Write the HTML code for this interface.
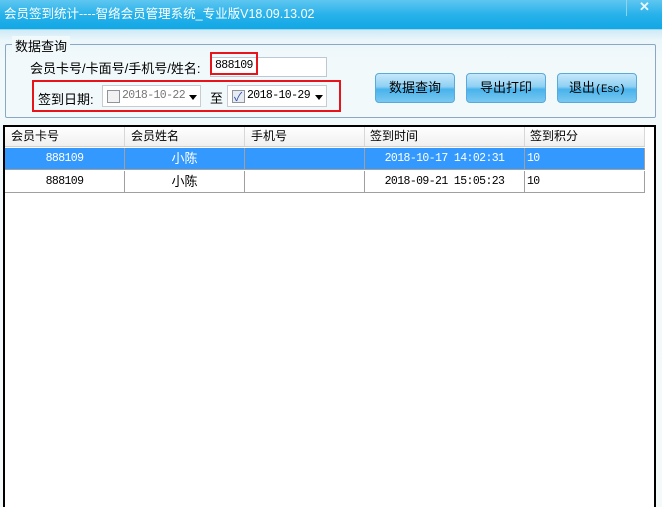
<!DOCTYPE html>
<html><head><meta charset="utf-8"><style>
*{margin:0;padding:0;box-sizing:border-box}
body{width:662px;height:507px;overflow:hidden;position:relative;font-family:"Liberation Sans","Noto Sans CJK SC","WenQuanYi Zen Hei",sans-serif;font-size:12px;color:#000;background:linear-gradient(#cfeaf6 30px,#eaf6fa 40px,#f2f9fb 60px,#f4f9f9)}
.a{position:absolute}
.m{font-family:"Liberation Mono","DejaVu Sans Mono",monospace;font-size:11.5px;letter-spacing:-0.6px}
.title{left:0;top:0;width:662px;height:30px;background:linear-gradient(#5ec6f0,#28b2ea 50%,#11a7e5);color:#fff;font-size:12.5px;line-height:28px;padding-left:4px;border-bottom:1px solid #9fd9f0}
.x{right:0;top:0;width:36px;height:16px;color:#e8f6fc;font-weight:bold;font-size:13px;text-align:center;line-height:13px;border-left:1px solid #8fd3f0}
.grp{left:5px;top:44px;width:651px;height:74px;border:1px solid #8aa8c6;border-radius:2px}
.legend{left:12px;top:36px;background:#f2f9fb;padding:0 3px;font-size:13px}
.inp{background:#fff;border:1px solid #bcc8d4}
.red{border:2px solid #e8141c}
.btn{top:73px;width:80px;height:30px;border:1px solid #5aa9dc;border-radius:4px;background:linear-gradient(#c6e8fa,#8fd0f3 45%,#49b3ec 55%,#79c8f1);text-align:center;line-height:28px;font-size:13px}
.dd{background:#fff;border:1px solid #c8ccd2;height:22px}
.cb{width:13px;height:13px;border:1px solid #8d949c;background:#f2f2f2;top:4px;left:4px}
.arr{width:0;height:0;border-left:4px solid transparent;border-right:4px solid transparent;border-top:5px solid #000;top:9px}
.grid{left:3px;top:125px;width:653px;height:382px;background:#fff;border:2px solid #000;border-bottom:none}
.row{position:absolute;left:0;height:22px}
.c{position:absolute;top:0;height:100%;border-right:1px solid #a0a0a0;line-height:21px;overflow:hidden}
.c.m{line-height:22px}
</style></head><body>
<div class="a title">会员签到统计----智络会员管理系统_专业版V18.09.13.02</div>
<div class="a x">✕</div>
<div class="a grp"></div>
<div class="a legend">数据查询</div>
<div class="a" style="left:30px;top:58px;font-size:13px">会员卡号/卡面号/手机号/姓名:</div>
<div class="a inp" style="left:210px;top:57px;width:117px;height:20px"></div>
<div class="a red" style="left:210px;top:52px;width:48px;height:23px"></div>
<div class="a m" style="left:215px;top:59px;line-height:14px">888109</div>
<div class="a red" style="left:32px;top:80px;width:309px;height:32px"></div>
<div class="a" style="left:38px;top:89px;font-size:13px">签到日期:</div>
<div class="a dd" style="left:102px;top:85px;width:99px"><div class="a cb"></div><div class="a m" style="left:19px;top:3px;line-height:14px;color:#777">2018-10-22</div><div class="a arr" style="left:86px"></div></div>
<div class="a" style="left:210px;top:88px;font-size:13px">至</div>
<div class="a dd" style="left:227px;top:85px;width:100px"><div class="a cb" style="background:#e8ecf2"><span style="position:absolute;left:1px;top:-3px;color:#2a4fb0;font-size:12px">✓</span></div><div class="a m" style="left:19px;top:3px;line-height:14px">2018-10-29</div><div class="a arr" style="left:87px"></div></div>
<div class="a btn" style="left:375px">数据查询</div>
<div class="a btn" style="left:466px">导出打印</div>
<div class="a btn" style="left:557px">退出<span class="m" style="font-size:11px">(Esc)</span></div>
<div class="a grid">
<div class="row" style="top:0;height:20px;background:linear-gradient(#fff,#f0f0f0);border-bottom:1px solid #d0d0d0;width:640px">
<div class="c" style="left:0;width:120px;padding-left:6px;border-color:#d8d8d8;line-height:19px">会员卡号</div>
<div class="c" style="left:120px;width:120px;padding-left:6px;border-color:#d8d8d8;line-height:19px">会员姓名</div>
<div class="c" style="left:240px;width:120px;padding-left:6px;border-color:#d8d8d8;line-height:19px">手机号</div>
<div class="c" style="left:360px;width:160px;padding-left:5px;border-color:#d8d8d8;line-height:19px">签到时间</div>
<div class="c" style="left:520px;width:120px;padding-left:5px;border-color:#d8d8d8;line-height:19px">签到积分</div>
</div>
<div class="row" style="top:21px;width:640px;background:#3399ff;color:#fff;border-bottom:1px solid #a0a0a0">
<div class="c m" style="left:0;width:120px;text-align:center">888109</div>
<div class="c" style="left:120px;width:120px;text-align:center;font-size:13px">小陈</div>
<div class="c" style="left:240px;width:120px"></div>
<div class="c m" style="left:360px;width:160px;text-align:center">2018-10-17 14:02:31</div>
<div class="c m" style="left:520px;width:120px;padding-left:2px">10</div>
</div>
<div class="row" style="top:44px;width:640px;border-bottom:1px solid #a0a0a0">
<div class="c m" style="left:0;width:120px;text-align:center">888109</div>
<div class="c" style="left:120px;width:120px;text-align:center;font-size:13px">小陈</div>
<div class="c" style="left:240px;width:120px"></div>
<div class="c m" style="left:360px;width:160px;text-align:center">2018-09-21 15:05:23</div>
<div class="c m" style="left:520px;width:120px;padding-left:2px">10</div>
</div>
</div>
</body></html>
